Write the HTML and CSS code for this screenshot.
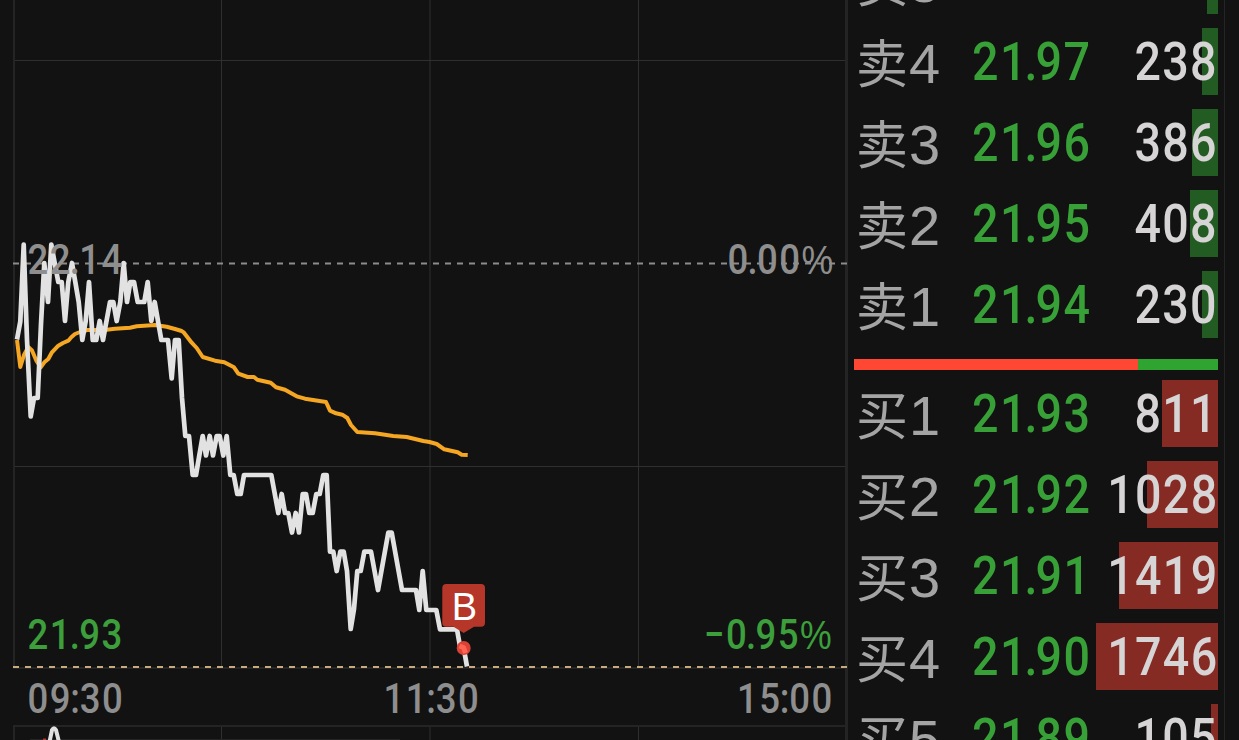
FILE: index.html
```html
<!DOCTYPE html>
<html lang="zh-CN">
<head>
  <meta charset="UTF-8">
  <meta name="viewport" content="width=device-width, initial-scale=1.0">
  <title>分时</title>
  <link rel="stylesheet" href="styles.css">
</head>
<body>
  <div id="chart">
    <svg width="848" height="740" viewBox="0 0 848 740">
      <!-- grid -->
      <path class="grid" d="M221.5 0V667M221.5 726V740M430 0V667M430 726V740M638.5 0V667M638.5 726V740M13 60.5H846M13 466.5H846"/>
      <path class="grid frame" d="M14 0V667M14 725V740M13 668H847M13 726H847"/>
      <path class="grid frame" d="M30 740H400"/>
      <path class="edge" d="M846.5 0V740"/>
      <path class="zero-line" d="M13 263.5H847"/>

      <polyline class="avg" points="17,340 20.3,367 24,355 28.3,347 32,350.5 36.5,361 40.7,367.3 44.3,362.3 48.3,359 51.7,352.7 58.3,345.7 63,343 68.3,340.7 71.5,337 75,334 80,332 87.3,330 106.7,329.7 115,328.8 130,327.7 136.7,326.3 155,325 166.7,326.7 175,329 181.7,331 184,332.7 191.7,342.7 196.7,348 202.7,357 215,360.7 224.3,362.3 234,367.3 238.3,373.7 247.7,377 254,377 257.3,379.7 270.7,382.7 276,387.3 285,389.7 296.7,396.3 305,398.7 326,402 330,410.7 336,413.3 342.3,414.7 347.3,418 351,425 357.3,432 375,433.3 393.3,436 406.7,437 423.3,441 429.5,442 436.7,444 444.3,449.3 457.7,452.3 461.7,454.7 467.7,455"/>
      <polyline class="price-line" points="17,339.5 20.3,321.5 23.7,244.5 27,340 30.7,416.5 34,398 37.7,398 41,324 44.3,263 48,302 51.3,244.5 54.7,263 58.3,282 61.7,282 65,321 68.3,282 72,263 75.3,282 78.7,302 82.3,340 85.7,321 89,282 92.7,340 96.3,340 99.7,321 103,340 106.5,321 110,302 113.3,302 116.7,321 120.3,302 123.7,263 127,302 130.3,282 134,282 137.7,302 144.3,302 147.7,282 151.3,321 154.7,302 158,321 161.3,340 168,340 171.7,378.5 175,340 178.7,340 182,398 185.3,436 189,436 192.7,475 196,475 199.3,455.5 202.7,436 206,455.5 209.7,436 213,455.5 216.7,436 219.7,436 223.3,455.5 226.7,436 230.3,475 233.7,475 237.3,494 240.7,494 244,475 271.3,475 278.3,513 281.7,494 285,513 288.3,513 292,532.5 295.7,513 299,532.5 302.7,494 306,494 309.3,513 312.7,513 316.3,494 319.7,494 323.3,475 326.7,475 330,551.7 333.3,551.7 336.7,571 340.3,551.7 343.7,551.7 347,571 350.7,629 354,609 357.3,571 360.7,571 364.3,551.7 371,551.7 378,590 388.3,532.7 391.7,532.7 402,590 416,590 419.3,610 422.7,571 426.3,610 436.3,610 440,629.3 457,629.3 460.3,648 463.7,648 467,666.5"/>
      <path class="last-line" d="M13 667H847"/>

      <!-- buy marker -->
      <circle class="buy-dot" cx="463.7" cy="648" r="7"/>
      <path class="buy-core" d="M459.5 646L463.5 647.5L465.5 653"/>
      <path class="buy-flag" d="M446.300 584H481a4 4 0 0 1 4 4V622.700a4 4 0 0 1 -4 4H474L463.700 633L453.500 626.700H446.300a4 4 0 0 1 -4 -4V588a4 4 0 0 1 4 -4Z"/>
      <text class="buy-text" x="464.5" y="619.500">B</text>

      <!-- volume pane -->
      <path class="vol-line" d="M49.500 742L52 730Q54 726.500 56 730L59 742"/>
      <path class="vol-bar" d="M43 738.500h3V740h-3z"/>

      <text class="axis" transform="translate(27.500 274) scale(.87 1)" dx="0 0 -2.500 -2.500">22.14</text>
      <text class="axis" transform="translate(727.500 274) scale(.87 1)" dx="0 -2.500 -2.500">0.00<tspan class="pct">%</tspan></text>
      <text class="axis down" transform="translate(27.500 649) scale(.87 1)" dx="0 0 -2.500 -2.500">21.93</text>
      <text class="axis down" transform="translate(704 649) scale(.87 1)" dx="0 0 -2.500 -2.500">−0.95<tspan class="pct">%</tspan></text>
      <text class="axis" transform="translate(27.500 713) scale(.87 1)" dx="0 0 -2 -2">09:30</text>
      <text class="axis" transform="translate(383.500 713) scale(.87 1)" dx="0 0 -2 -2">11:30</text>
      <text class="axis" transform="translate(737 713) scale(.87 1)" dx="0 0 -2 -2">15:00</text>
    </svg>
  </div>

  <div id="book">
    <div class="side sell">
      <div class="row"><span class="label">卖<b>5</b></span><span class="price">21<i>.</i>98</span><span class="vol"></span><span class="bar" style="width: 11px"></span></div>
      <div class="row"><span class="label">卖<b>4</b></span><span class="price">21<i>.</i>97</span><span class="vol">238</span><span class="bar" style="width: 16px"></span></div>
      <div class="row"><span class="label">卖<b>3</b></span><span class="price">21<i>.</i>96</span><span class="vol">386</span><span class="bar" style="width: 26px"></span></div>
      <div class="row"><span class="label">卖<b>2</b></span><span class="price">21<i>.</i>95</span><span class="vol">408</span><span class="bar" style="width: 28px"></span></div>
      <div class="row"><span class="label">卖<b>1</b></span><span class="price">21<i>.</i>94</span><span class="vol">230</span><span class="bar" style="width: 16px"></span></div>
    </div>
    <div class="ratio"><span style="width: 284px"></span></div>
    <div class="side buy">
      <div class="row"><span class="label">买<b>1</b></span><span class="price">21<i>.</i>93</span><span class="vol">811</span><span class="bar" style="width: 56px"></span></div>
      <div class="row"><span class="label">买<b>2</b></span><span class="price">21<i>.</i>92</span><span class="vol">1028</span><span class="bar" style="width: 71px"></span></div>
      <div class="row"><span class="label">买<b>3</b></span><span class="price">21<i>.</i>91</span><span class="vol">1419</span><span class="bar" style="width: 99px"></span></div>
      <div class="row"><span class="label">买<b>4</b></span><span class="price">21<i>.</i>90</span><span class="vol">1746</span><span class="bar" style="width: 122px"></span></div>
      <div class="row"><span class="label">买<b>5</b></span><span class="price">21<i>.</i>89</span><span class="vol">105</span><span class="bar" style="width: 7px"></span></div>
    </div>
  </div>
</body>
</html>
```
FILE: styles.css
```css
body {
  margin: 0;
  width: 1239px;
  height: 740px;
  overflow: hidden;
  display: flex;
  background-color: #121212;
  font-family: Roboto, "Noto Sans CJK SC", sans-serif;
}
#chart {
  width: 848px;
  height: 740px;
}
#chart svg {
  display: block;
}
.grid {
  fill: none;
  stroke: #2f2f2f;
  stroke-width: 1;
}
.frame {
  stroke: #242424;
  stroke-width: 2;
}
.edge {
  stroke: #242424;
  stroke-width: 3;
}
.zero-line {
  stroke: #8c8c8c;
  stroke-width: 2;
  stroke-dasharray: 6 6;
}
.last-line {
  stroke: #c8aa7e;
  stroke-width: 2;
  stroke-dasharray: 6 6;
}
.avg {
  fill: none;
  stroke: #f5a623;
  stroke-width: 4;
  stroke-linejoin: round;
}
.price-line {
  fill: none;
  stroke: #e2e2e2;
  stroke-width: 4.7;
  stroke-linejoin: round;
}
.vol-line {
  fill: none;
  stroke: #e2e2e2;
  stroke-width: 4;
}
.vol-bar {
  fill: #b63628;
}
.buy-dot {
  fill: #dc4234;
}
.buy-core {
  fill: none;
  stroke: #ff6455;
  stroke-width: 5;
  stroke-linejoin: round;
}
.buy-flag {
  fill: #b63629;
}
.buy-text {
  fill: #fff;
  font-family: "Liberation Sans", Arial, sans-serif;
  font-size: 38px;
  text-anchor: middle;
}
.axis {
  fill: #8e8e8e;
  font-size: 42px;
  font-weight: 500;
  letter-spacing: 1.7px;
}
.axis.down {
  fill: #3c9f3c;
}
.pct {
  font-family: "Liberation Sans", Arial, sans-serif;
  font-size: 41px;
  font-weight: normal;
}

#book {
  width: 364px;
  height: 740px;
  padding: 0 6px;
  border-right: 1px solid #242424;
  overflow: hidden;
}
.side {
  display: flex;
  flex-direction: column;
  gap: 14px;
}
.sell {
  margin-top: -53px;
}
.row {
  position: relative;
  display: flex;
  align-items: center;
  height: 67px;
  line-height: 67px;
}
.label {
  flex: none;
  width: 118px;
  height: 67px;
  padding-left: 2px;
  box-sizing: border-box;
  color: #a4a4a4;
  font-family: "Noto Sans CJK SC", sans-serif;
  font-size: 52px;
  line-height: 65px;
  white-space: nowrap;
}
.label b {
  margin-left: 1px;
  font-family: "Liberation Sans", Arial, sans-serif;
  font-size: 56px;
  font-weight: normal;
}
.price, .vol {
  flex: none;
  padding-top: 2px;
  font-size: 53px;
  font-weight: 500;
  letter-spacing: 1.7px;
}
.price {
  margin-right: -17px;
  color: #37a137;
  transform: scaleX(0.88);
  transform-origin: left;
}
.price i {
  font-style: normal;
  margin: 0 -4px;
}
.vol {
  position: relative;
  z-index: 1;
  margin-left: auto;
  color: #d6d4d4;
  letter-spacing: 1.5px;
  transform: scaleX(0.88);
  transform-origin: right;
}
/* volume bar lies behind the number */
.bar {
  position: absolute;
  right: 0;
  top: 0;
  height: 67px;
}
.sell .bar {
  background-color: #235c22;
}
.buy .bar {
  background-color: #862b23;
}
.ratio {
  height: 11px;
  margin: 21px 0 10px;
  background-color: #30a430;
}
.ratio span {
  display: block;
  height: 11px;
  background-color: #ff4734;
}
```
